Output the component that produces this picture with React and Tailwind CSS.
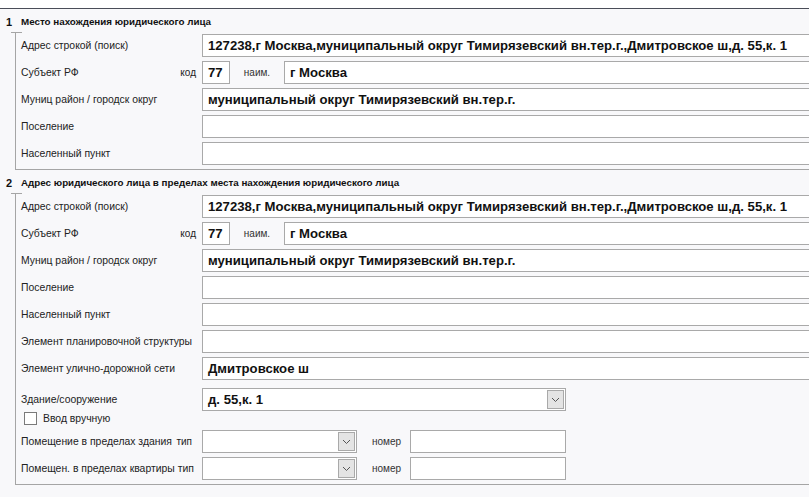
import React from 'react';

const ADDRESS = '127238,г Москва,муниципальный округ Тимирязевский вн.тер.г.,Дмитровское ш,д. 55,к. 1';
const MUNIC = 'муниципальный округ Тимирязевский вн.тер.г.';

function Box({ value, className = '' }) {
    return (
        <div className={`h-[23px] bg-white border border-[#a9a9a9] flex items-center pl-[5px] text-[13.15px] font-bold text-[#111] whitespace-nowrap overflow-hidden ${className}`}>
            {value}
        </div>
    );
}

function Chevron() {
    return (
        <svg width="9" height="6" viewBox="0 0 9 6" fill="none">
            <path d="M1 1l3.5 3.5L8 1" stroke="#555" strokeWidth="1" />
        </svg>
    );
}

function Select({ value, className = '' }) {
    return (
        <div className={`h-[23px] bg-white border border-[#a9a9a9] flex items-center ${className}`}>
            <div className="flex-1 pl-[5px] text-[13.15px] font-bold text-[#111] whitespace-nowrap">{value}</div>
            <div className="w-[17px] h-[19px] mr-px bg-[#e4e4e4] border border-[#a9a9a9] flex items-center justify-center">
                <Chevron />
            </div>
        </div>
    );
}

function Row({ label, right, rightPad = 'pr-[6px]', children }) {
    return (
        <div className="flex items-center h-[23px]">
            <div className={`w-[186px] shrink-0 flex items-center justify-between pl-[5px] ${rightPad} text-[10.4px] text-[#222] whitespace-nowrap`}>
                <span>{label}</span>
                {right && <span className="text-[10px]">{right}</span>}
            </div>
            <div className="flex-1 flex items-center min-w-0">{children}</div>
        </div>
    );
}

function Header({ num, title }) {
    return (
        <div className="h-[23px] pt-[3px] flex items-center text-[9.8px] font-bold text-[#111] whitespace-nowrap">
            <span className="w-[21px] pl-[6px] text-[11px]">{num}</span>
            <span>{title}</span>
        </div>
    );
}

function Frame({ children }) {
    return (
        <div className="relative ml-[15px] border-l border-b border-[#a5a5a5] pt-[2px] pb-[4px] flex flex-col gap-[4px]">
            <div className="absolute top-0 -left-[5px] w-[11px] h-px bg-[#a5a5a5]" />
            {children}
        </div>
    );
}

function SubjectRow() {
    return (
        <Row label="Субъект РФ" right="код">
            <Box value="77" className="w-[28px]" />
            <span className="w-[54px] text-center text-[10px] text-[#333]">наим.</span>
            <Box value="г Москва" className="flex-1 mr-[-4px]" />
        </Row>
    );
}

export default function App() {
    return (
        <div className="w-[809px] h-[497px] overflow-hidden bg-[#f8f8fa] font-[Liberation_Sans,Arial,sans-serif]">
            <div className="h-[8px] bg-white" />
            <div className="h-px bg-[#4a4d58]" />

            <Header num="1" title="Место нахождения юридического лица" />
            <Frame>
                <Row label="Адрес строкой (поиск)"><Box value={ADDRESS} className="flex-1 mr-[-4px]" /></Row>
                <SubjectRow />
                <Row label="Муниц район / городск округ"><Box value={MUNIC} className="flex-1 mr-[-4px]" /></Row>
                <Row label="Поселение"><Box className="flex-1 mr-[-4px]" /></Row>
                <Row label="Населенный пункт"><Box className="flex-1 mr-[-4px]" /></Row>
            </Frame>

            <Header num="2" title="Адрес юридического лица в пределах места нахождения юридического лица" />
            <Frame>
                <Row label="Адрес строкой (поиск)"><Box value={ADDRESS} className="flex-1 mr-[-4px]" /></Row>
                <SubjectRow />
                <Row label="Муниц район / городск округ"><Box value={MUNIC} className="flex-1 mr-[-4px]" /></Row>
                <Row label="Поселение"><Box className="flex-1 mr-[-4px]" /></Row>
                <Row label="Населенный пункт"><Box className="flex-1 mr-[-4px]" /></Row>
                <Row label="Элемент планировочной структуры"><Box className="flex-1 mr-[-4px]" /></Row>
                <Row label="Элемент улично-дорожной сети"><Box value="Дмитровское ш" className="flex-1 mr-[-4px]" /></Row>

                <div className="flex mt-[4px]">
                    <div className="w-[186px] shrink-0 text-[10.4px] text-[#222] whitespace-nowrap">
                        <div className="h-[23px] flex items-center pl-[5px]">Здание/сооружение</div>
                        <div className="h-[15px] flex items-center pl-[8px] gap-[6px]">
                            <div className="w-[13px] h-[13px] bg-white border border-[#7a7a7a]" />
                            <span>Ввод вручную</span>
                        </div>
                    </div>
                    <Select value="д. 55,к. 1" className="w-[364px]" />
                </div>

                <Row label="Помещение в пределах здания" right="тип" rightPad="pr-[10px]">
                    <Select className="w-[155px]" />
                    <span className="w-[53px] pl-[15px] text-[10px] text-[#333]">номер</span>
                    <Box className="w-[156px]" />
                </Row>
                <Row label="Помещен. в пределах квартиры тип">
                    <Select className="w-[155px]" />
                    <span className="w-[53px] pl-[15px] text-[10px] text-[#333]">номер</span>
                    <Box className="w-[156px]" />
                </Row>
            </Frame>
        </div>
    );
}
